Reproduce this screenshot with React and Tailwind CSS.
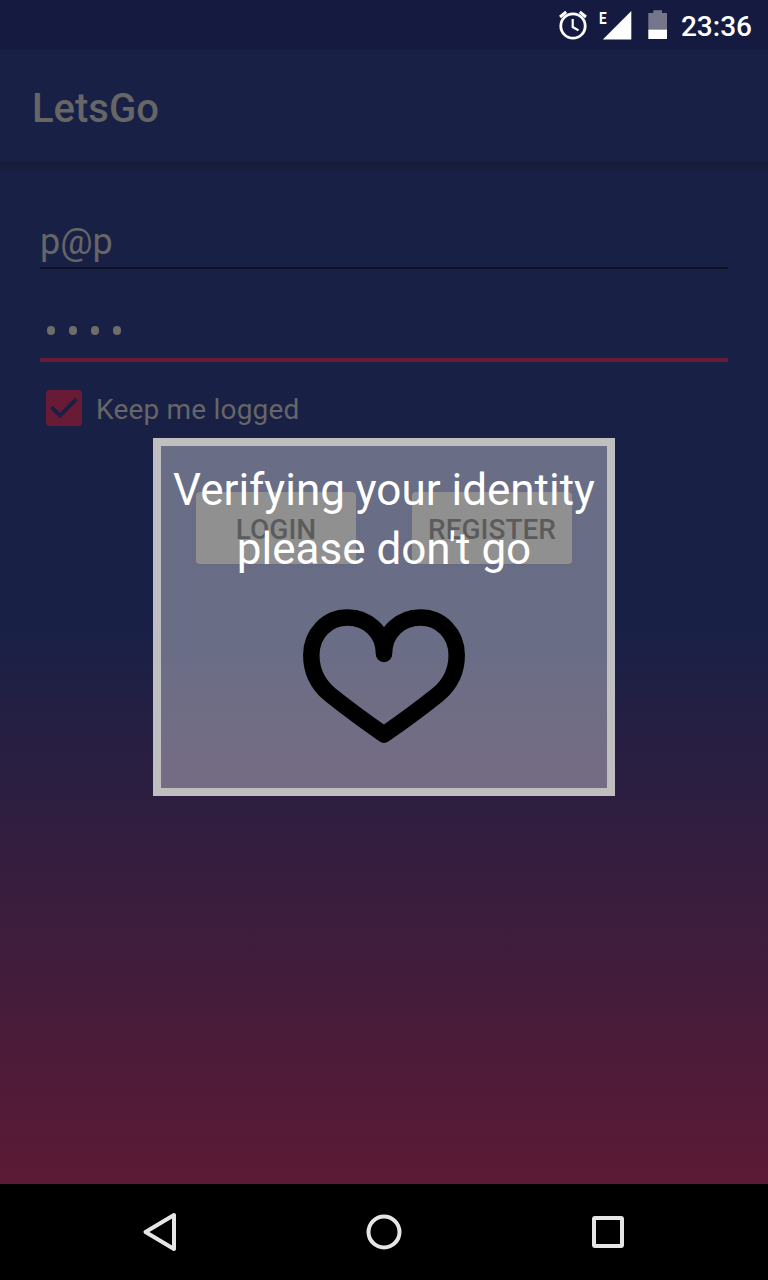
function StatusBar() {
  return (
    <div className="flex h-[50px] shrink-0 items-center justify-end bg-[#141a40] pr-4 text-white">
      <svg className="mr-3 h-[34px] w-[30px]" viewBox="0 0 30 34" fill="none" stroke="currentColor">
        <circle cx="15" cy="18" r="12.2" strokeWidth="2.8" />
        <path d="M14.7 11v8l5.8 3.4" strokeWidth="2.2" />
        <path d="M2 9l6.2-5.2M28 9l-6.2-5.2" strokeWidth="3" />
      </svg>
      <div className="relative mr-4 h-[34px] w-8">
        <span className="absolute -top-px -left-px origin-left scale-x-[0.8] text-[17px] leading-[22px] font-bold">E</span>
        <svg className="h-[34px] w-8" viewBox="0 0 32 34" fill="currentColor">
          <path d="M31.3 3v28.500H2.800z" />
        </svg>
      </div>
      <svg className="mr-[13px] h-[34px] w-5" viewBox="0 0 20 34" fill="currentColor">
        <path d="M0.300 5H5.300V2.300H14V5H19V21.500H0.300z" fill="#74778c" />
        <path d="M0.300 21.500H19V31H0.300z" />
      </svg>
      <span className="pt-[3px] text-[28px] leading-[34px] font-medium">23:36</span>
    </div>
  );
}

function ActionButton({ children }) {
  return (
    <button className="flex h-[72px] w-40 items-center justify-center rounded-[4px] bg-[#555555] pt-[3px] text-[28px] font-medium text-[#040404] shadow-[0_2px_4px_rgba(0,0,0,0.12)]">
      {children}
    </button>
  );
}

function VerifyingDialog() {
  return (
    <div className="absolute top-[438px] left-[153px] flex h-[358px] w-[462px] flex-col items-center border-8 border-[#bfbfbf] bg-white/35 bg-clip-padding pt-[15px] text-white">
      <p className="text-center text-[44px] leading-[59px] whitespace-nowrap">
        Verifying your identity
        <br />
        please don't go
      </p>
      <svg className="mt-[25px] h-[144px] w-[170px]" viewBox="299 604 170 144" fill="none" stroke="#000" strokeWidth="16.500" strokeLinecap="round" strokeLinejoin="round">
        <path d="M384 654C384 632 367.500 617.500 347.500 617.500C327 617.500 311.300 634 311.300 655C311.300 672 318.500 685 330 694.500C340 702.500 363 720 384 734.500C405 720 428 702.500 438 694.500C449.500 685 456.700 672 456.700 655C456.700 634 441 617.500 420.500 617.500C400.500 617.500 384 632 384 654" />
      </svg>
    </div>
  );
}

function NavigationBar() {
  return (
    <nav className="grid h-24 shrink-0 grid-cols-[224px_224px_224px] justify-center bg-black">
      {[
        <path key="back" d="M38 7L9.500 24L38 41z" strokeLinejoin="round" />,
        <circle key="home" cx="24" cy="24" r="15.500" />,
        <rect key="recent" x="10" y="10" width="28" height="28" rx="1" strokeLinejoin="round" />,
      ].map((shape) => (
        <button key={shape.key} className="flex items-center justify-center">
          <svg className="size-12 overflow-visible" viewBox="0 0 48 48" fill="none" stroke="#e6e6e6" strokeWidth="4">
            {shape}
          </svg>
        </button>
      ))}
    </nav>
  );
}

export default function App() {
  return (
    <div className="relative flex h-[1280px] w-[768px] flex-col overflow-hidden bg-black font-['Roboto',sans-serif]">
      <StatusBar />
      <div className="flex flex-1 flex-col bg-[linear-gradient(to_bottom,#192046_51%,#5c1a35_100%)]">
        <header className="flex h-28 shrink-0 items-center bg-[#192046] pt-[6px] pl-8">
          <h1 className="text-[40px] leading-[48px] font-medium text-[#666666]">LetsGo</h1>
        </header>
        <div className="h-[14px] shrink-0 bg-linear-to-b from-[#161b39] to-[#192046]" />
        <main className="flex flex-col px-10 text-[#666666]">
          <div className="mt-[41px] flex h-[52px] items-start border-b-2 border-[#0d1022] pt-px text-[36px] leading-[48px]">
            p@p
          </div>
          <div className="flex h-[93px] items-start gap-[14px] border-b-4 border-[#691b35] pt-[57px] pl-[7px]">
            {[0, 1, 2, 3].map((dot) => (
              <span key={dot} className="h-[9px] w-2 rounded-full bg-[#6c6c69]" />
            ))}
          </div>
          <label className="mt-7 flex h-9 items-center pl-[6px]">
            <svg className="mr-[14px] size-9" viewBox="0 0 36 36">
              <rect width="36" height="36" rx="3.500" fill="#691b35" />
              <path d="M5.500 17l8.500 8.500L30.500 8.800" fill="none" stroke="#192046" strokeWidth="3.800" />
            </svg>
            <span className="pt-[3px] text-[28px] leading-[36px] tracking-[0.2px]">Keep me logged</span>
          </label>
          <div className="mt-[66px] flex justify-center gap-14">
            <ActionButton>LOGIN</ActionButton>
            <ActionButton>REGISTER</ActionButton>
          </div>
        </main>
      </div>
      <NavigationBar />
      <VerifyingDialog />
    </div>
  );
}
